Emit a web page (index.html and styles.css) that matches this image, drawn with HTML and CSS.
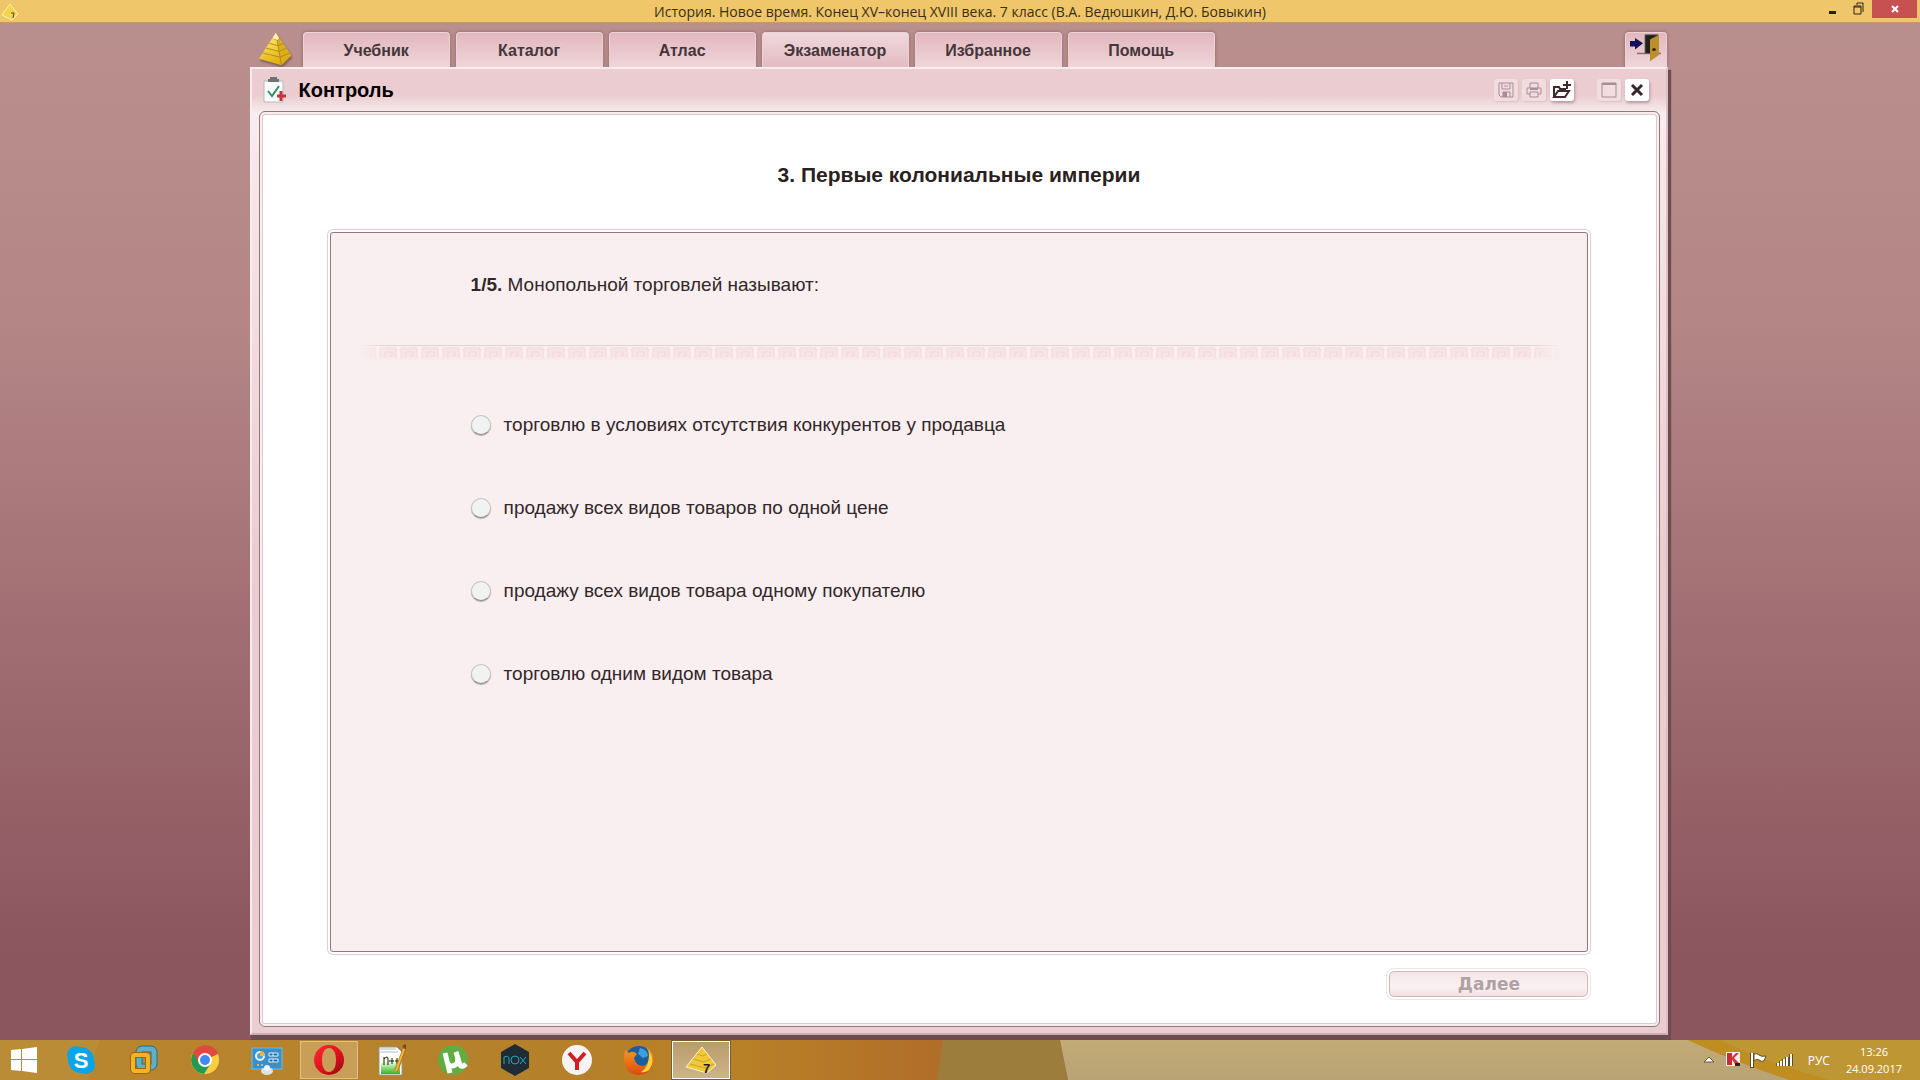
FILE: index.html
```html
<!DOCTYPE html>
<html lang="ru">
<head>
<meta charset="utf-8">
<title>История. Новое время. Конец XV–конец XVIII века. 7 класс</title>
<link rel="stylesheet" href="styles.css">
</head>
<body>
<svg class="defs" aria-hidden="true">
  <defs>
    <linearGradient id="gold" x1="0" y1="0" x2="0.4" y2="1"><stop offset="0" stop-color="#fff0a0"/><stop offset="0.5" stop-color="#f3d242"/><stop offset="1" stop-color="#e3ae10"/></linearGradient>
    <linearGradient id="opera" x1="0" y1="0" x2="1" y2="1"><stop offset="0" stop-color="#ff2a35"/><stop offset="0.6" stop-color="#d8101c"/><stop offset="1" stop-color="#8d0a12"/></linearGradient>
    <linearGradient id="page" x1="0" y1="0" x2="0" y2="1"><stop offset="0.3" stop-color="#f8fff0"/><stop offset="1" stop-color="#2fb51c"/></linearGradient>
    <linearGradient id="fox" x1="0" y1="0" x2="0" y2="1"><stop offset="0" stop-color="#f7a01e"/><stop offset="1" stop-color="#dc4a12"/></linearGradient>
    <pattern id="meander" width="21" height="16" patternUnits="userSpaceOnUse">
      <path d="M2 2H18V12H2Z" fill="#f8e4e7"/>
      <path d="M0 11H20V14H0Z" fill="#f9e9eb"/>
      <path d="M2 12V2H18V12M7 12V6H14V10H11" fill="none" stroke="#f0d9dc" stroke-width="1"/>
    </pattern>
    <symbol id="pyramid" viewBox="0 0 40 42">
      <path d="M21 1 40 29 28 41 0 33Z" fill="url(#gold)"/>
      <path d="M21 1 40 29 28 41Z" fill="#dcae1c"/>
      <path d="M17 8 23 10 26 8M13 14 24 17 30 14M9 20 25 24 34 20M5 26 26 31 38 26M21 1 28 41" fill="none" stroke="#a98118" stroke-width="1"/>
      <path d="M21 1 17 8 23 10 25 8Z" fill="#fff3b8"/>
    </symbol>
  </defs>
</svg>

<header class="titlebar">
  <svg class="title-icon" viewBox="0 0 18 18" aria-hidden="true"><path d="M9 1 17 11 11 17 1 12Z" fill="#f2d54a" stroke="#fff0b4"/><path d="M10 10h3l-1 5" fill="none" stroke="#444" stroke-width="1"/></svg>
  <h1 class="title-text">История. Новое время. Конец XV–конец XVIII века. 7 класс (В.А. Ведюшкин, Д.Ю. Бовыкин)</h1>
  <div class="caption-buttons">
    <button class="caption" aria-label="Свернуть"><svg width="12" height="14"><path d="M2 9h7v3H2z" fill="#222"/></svg></button>
    <button class="caption" aria-label="Восстановить"><svg width="12" height="14"><path d="M1 4h7v8H1zM1 5h7M4 3V1h6v9" fill="none" stroke="#2b2412"/></svg></button>
    <button class="caption caption-close" aria-label="Закрыть"><svg width="12" height="12"><path d="M3 3 9 9M9 3 3 9" stroke="#fff" stroke-width="2"/></svg></button>
  </div>
</header>

<main class="app">
  <nav class="tabs">
    <svg class="logo" aria-hidden="true"><use href="#pyramid"/></svg>
    <button class="tab">Учебник</button>
    <button class="tab">Каталог</button>
    <button class="tab">Атлас</button>
    <button class="tab tab-active">Экзаменатор</button>
    <button class="tab">Избранное</button>
    <button class="tab">Помощь</button>
    <button class="tab tab-exit" aria-label="Выход">
      <svg width="34" height="28" viewBox="0 0 34 36" preserveAspectRatio="none"><path d="M8 25H32" stroke="#8a7070" stroke-width="2"/><path d="M1 9H6V5L14 12 6 20V16H1Z" fill="#14105a"/><path d="M16 1H29V25H16Z" fill="#232018" stroke="#666" stroke-width="1"/><path d="M21 7 30 1V27L21 35Z" fill="#bb8f2c"/><circle cx="25" cy="20" r="2" fill="#3b2d08"/></svg>
    </button>
  </nav>

  <section class="panel">
    <div class="panel-head">
      <svg class="clip" viewBox="0 0 24 26" aria-hidden="true"><path d="M1 4H20V25H1Z" fill="#f9fbfb" stroke="#b3bcbc"/><path d="M5 5V2H7V0H14V2H16V5Z" fill="#6c7276"/><path d="M5 14 9 19 16 9" fill="none" stroke="#2f8f6b" stroke-width="2"/><path d="M18 14V24M14 19H23" stroke="#c5303a" stroke-width="3"/></svg>
      <h2 class="panel-title">Контроль</h2>
      <div class="tools">
        <button class="tool" disabled aria-label="Сохранить"><svg width="16" height="16"><path d="M1 1H15V15H3L1 13ZM4 1V7H12V1M5 15V10H12V15M6 4H10" fill="none" stroke="#a78f93"/><path d="M5 10H9V15H5Z" fill="#a78f93"/></svg></button>
        <button class="tool" disabled aria-label="Печать"><svg width="16" height="16"><path d="M4 6V1H12V6M4 12H1V6H15V12H12M4 10H12V15H4Z" fill="none" stroke="#a78f93"/><path d="M4 6H12V8H4Z" fill="#a78f93"/></svg></button>
        <button class="tool" aria-label="Открыть"><svg width="20" height="18"><path d="M2 16V6H7L8 8H13V10M2 16 6 10H17L13 16Z" fill="none" stroke="#3f2b2e" stroke-width="2"/><path d="M15 0V8M11 4H19" stroke="#3f2b2e" stroke-width="2"/></svg></button>
        <button class="tool tool-window" disabled aria-label="Развернуть"><svg width="16" height="16"><path d="M1 1H15V15H1Z" fill="none" stroke="#a78f93"/><path d="M1 1H15V3H1Z" fill="#a78f93"/></svg></button>
        <button class="tool" aria-label="Закрыть раздел"><svg width="16" height="16"><path d="M3 3 13 13M13 3 3 13" stroke="#33272a" stroke-width="3"/></svg></button>
      </div>
    </div>

    <div class="frame">
      <h3 class="topic">3. Первые колониальные империи</h3>
      <form class="quiz-form">
        <fieldset class="quiz">
          <legend class="question"><b>1/5.</b> Монопольной торговлей называют:</legend>
          <svg class="ornament" aria-hidden="true"><rect width="100%" height="16" fill="url(#meander)"/></svg>
          <label class="answer"><input class="radio" type="radio" name="answer">торговлю в условиях отсутствия конкурентов у продавца</label>
          <label class="answer"><input class="radio" type="radio" name="answer">продажу всех видов товаров по одной цене</label>
          <label class="answer"><input class="radio" type="radio" name="answer">продажу всех видов товара одному покупателю</label>
          <label class="answer"><input class="radio" type="radio" name="answer">торговлю одним видом товара</label>
        </fieldset>
        <button class="next" type="button" disabled>Далее</button>
      </form>
    </div>
  </section>
</main>

<footer class="taskbar">
  <svg class="wallpaper" viewBox="0 0 1920 40" preserveAspectRatio="none" aria-hidden="true">
    <defs>
      <linearGradient id="w1"><stop offset="0" stop-color="#b9872f"/><stop offset="0.6" stop-color="#b5802a"/><stop offset="0.78" stop-color="#b98127"/><stop offset="1" stop-color="#b06d29"/></linearGradient>
      <linearGradient id="w2" x1="0" y1="0" x2="0" y2="1"><stop offset="0" stop-color="#c3ab78"/><stop offset="1" stop-color="#b9a374"/></linearGradient>
    </defs>
    <path d="M0 0H944V40H0Z" fill="url(#w1)"/>
    <path d="M0 0H100Q92 20 88 40H0Z" fill="#bb8c36"/>
    <path d="M943 0H1060L1068 40H937Z" fill="#9d7d3c"/>
    <path d="M1060 0H1920V40H1068Z" fill="url(#w2)"/>
    <path d="M1688 0H1920V40H1790Q1740 24 1688 0Z" fill="#b98d2c"/>
    <path d="M1688 0H1730Q1770 26 1830 40H1790Q1740 24 1688 0Z" fill="#c08d20"/>
    <path d="M1720 0H1920V40H1830Q1770 24 1720 0Z" fill="#be9734"/>
  </svg>
  <button class="task task-start" aria-label="Пуск"><svg width="28" height="28"><path d="M1 4 11 3V13H1ZM12 3 27 1V13H12ZM1 14H11V25L1 24ZM12 14H27V27L12 25Z" fill="#fff"/></svg></button>
  <button class="task" aria-label="Skype"><svg width="30" height="30"><circle cx="10" cy="10" r="9" fill="#0aa5e6"/><circle cx="20" cy="20" r="9" fill="#0aa5e6"/><circle cx="15" cy="15" r="13" fill="#0aa5e6"/><text x="15" y="23" class="skype">S</text></svg></button>
  <button class="task" aria-label="VMware"><svg width="30" height="30"><rect x="11" y="4" width="15" height="18" rx="3" fill="none" stroke="#2d6f83" stroke-width="7"/><rect x="11" y="4" width="15" height="18" rx="3" fill="none" stroke="#5fb0c4" stroke-width="5"/><rect x="5" y="10" width="15" height="16" rx="2" fill="none" stroke="#a3650c" stroke-width="6"/><rect x="5" y="10" width="15" height="16" rx="2" fill="none" stroke="#f4b324" stroke-width="4"/></svg></button>
  <button class="task" aria-label="Chrome"><svg width="30" height="30"><circle cx="15" cy="15" r="14" fill="#fbce3f"/><path d="M15 15 3 8A14 14 0 0 1 28 9Z" fill="#dd4b3e"/><path d="M15 15 3 8A14 14 0 0 0 14 29L21 18Z" fill="#229a55"/><path d="M3 8 9 18 15 8H28A14 14 0 0 0 3 8Z" fill="#dd4b3e"/><circle cx="15" cy="15" r="7" fill="#fff"/><circle cx="15" cy="15" r="5" fill="#4387f2"/></svg></button>
  <button class="task" aria-label="Панель управления"><svg width="32" height="30"><rect x="1" y="3" width="30" height="21" fill="#3a8fc9" stroke="#69bfe6"/><circle cx="9" cy="11" r="4" fill="#4aa3dc" stroke="#e4f4fc" stroke-width="2"/><path d="M9 11V6A5 5 0 0 1 14 11Z" fill="#f6b23e"/><path d="M18 8H27V11H18ZM18 14H27V17H18ZM22 8V11M22 14V17" fill="#1d6aa6" stroke="#dff2fb"/><path d="M6 20H8M10 20H12" stroke="#f3b04a" stroke-width="2"/><ellipse cx="16" cy="26" rx="6" ry="4" fill="#dfe2e4"/><circle cx="16" cy="23" r="3" fill="#f4f5f6"/></svg></button>
  <button class="task task-open" aria-label="Opera"><svg width="32" height="32"><path d="M16 1A15 15 0 1 0 16 31A15 15 0 1 0 16 1ZM16 4C21 4 23 10 23 16S21 28 16 28 9 22 9 16 11 4 16 4Z" fill="url(#opera)" fill-rule="evenodd"/></svg></button>
  <button class="task" aria-label="Notepad++"><svg width="30" height="32"><path d="M3 3H21L26 8V31H3Z" fill="#fff" stroke="#8d9a84"/><path d="M5 12H24V30H5Z" fill="url(#page)"/><path d="M4 5H20M4 8H22" stroke="#b4bcc4"/><path d="M8 21V13M8 15Q12 11 12 15V21M13 17H18M16 14V20M19 17H24M21 14V20" fill="none" stroke="#17210f"/><path d="M20 27 29 4" stroke="#b87616" stroke-width="4"/><path d="M20 27 28 5" stroke="#f1bb42" stroke-width="2"/><path d="M28 4 30 1" stroke="#7e3f3f" stroke-width="4"/></svg></button>
  <button class="task" aria-label="µTorrent"><svg width="32" height="32"><circle cx="16" cy="16" r="15" fill="#62ad43"/><path d="M8 9 13 29M10 18Q13 24 18 21T19 8L23 21Q25 24 29 20" fill="none" stroke="#fff" stroke-width="5"/></svg></button>
  <button class="task" aria-label="Nox"><svg width="30" height="32"><path d="M15 0 29 8V24L15 32 1 24V8Z" fill="#202c35"/><path d="M4 20V13Q9 11 9 15V20M20 13 26 20M26 13 20 20" fill="none" stroke="#27a5b8" stroke-width="1"/><circle cx="15" cy="16" r="4" fill="none" stroke="#27a5b8"/></svg></button>
  <button class="task" aria-label="Яндекс"><svg width="32" height="32"><circle cx="16" cy="16" r="15" fill="#f6f4f2"/><path d="M8 9 16 18 24 9M16 17V26" fill="none" stroke="#cf1f24" stroke-width="4"/></svg></button>
  <button class="task" aria-label="Firefox"><svg width="32" height="32"><circle cx="16" cy="16" r="14" fill="#1c5d9d"/><path d="M17 4Q24 5 25 12L20 14 15 10Z" fill="#3f9fdc"/><path d="M2 6 6 9Q10 6 14 10L11 14Q13 22 20 22 26 20 26 13 26 7 23 3 34 11 30 21 25 32 14 31 2 29 1 17 1 11 2 6Z" fill="url(#fox)"/><path d="M26 7Q33 17 26 26 22 29 18 28 27 23 26 7Z" fill="#f8d23c"/></svg></button>
  <button class="task task-current" aria-label="История"><svg width="32" height="30"><path d="M17 2 31 20 22 28 1 22Z" fill="#f1c936" stroke="#fff6c8" stroke-width="1"/><path d="M12 9 18 11 22 9M8 14 19 17 26 14M5 19 20 23 29 19" fill="none" stroke="#c9a22e"/><text x="18" y="28" class="seven">7</text></svg></button>
  <div class="tray">
    <button class="tray-icon" aria-label="Скрытые значки"><svg width="10" height="8"><path d="M0 6 5 1 10 6Z" fill="#fff" stroke="#6a5a30"/></svg></button>
    <svg width="16" height="16" aria-hidden="true"><rect width="14" height="14" fill="#f5eeee"/><path d="M1 1H6V13H1Z" fill="#c52d33"/><path d="M5 6 10 1H13L8 6 14 12H9Z" fill="#d0353a"/><path d="M9 11H14V14H9Z" fill="#222"/></svg>
    <svg width="18" height="16" aria-hidden="true"><path d="M2 1V16" stroke="#5a4f2c" stroke-width="4"/><path d="M2 1V15" stroke="#fff" stroke-width="2"/><path d="M4 2Q7 1 9 3T16 4L14 9Q11 10 9 8T4 9Z" fill="#fff" stroke="#5a4f2c"/></svg>
    <svg width="18" height="16" aria-hidden="true"><path d="M2 11V14M5 9V14M8 7V14M11 5V14M15 2V14" stroke="#5a4f2c" stroke-width="4"/><path d="M2 11V14M5 9V14M8 7V14M11 5V14M15 2V14" stroke="#fff" stroke-width="2"/></svg>
    <span class="lang">РУС</span>
    <div class="clock"><time>13:26</time><time>24.09.2017</time></div>
  </div>
</footer>
</body>
</html>
```
FILE: styles.css
```css
* {
  box-sizing: border-box;
}

body {
  margin: 0;
  min-height: 100vh;
  display: flex;
  flex-direction: column;
  background: linear-gradient(#ba908f, #b48686 30%, #8c565e 88%, #8c565e);
  font-family: "Liberation Sans", Arial, sans-serif;
  color: #33272a;
}

button {
  margin: 0;
  padding: 0;
  border: 0;
  background: none;
  font: inherit;
  color: inherit;
}

h1, h2, h3 {
  margin: 0;
}

.defs {
  position: absolute;
  width: 0;
  height: 0;
}

/* Window title bar */
.titlebar {
  display: grid;
  grid-template-columns: 120px 1fr 120px;
  height: 23px;
  background: #efc66a;
  border-bottom: 1px solid #c39a66;
}

.title-icon {
  width: 18px;
  height: 18px;
  margin: 3px 1px;
}

.title-text {
  font: 14px/23px "Open Sans", "Noto Sans", sans-serif;
  text-align: center;
  color: #3a2f15;
  white-space: nowrap;
}

.caption-buttons {
  display: flex;
  justify-content: flex-end;
  padding-right: 3px;
}

.caption {
  width: 26px;
  height: 18px;
  display: grid;
  place-items: center;
}

.caption-close {
  width: 45px;
  background: #c75050;
}

/* Application shell */
.app {
  flex: 1;
  display: flex;
  flex-direction: column;
  margin: 0 calc(13% + 2px) 0 13%;
  padding-top: 9px;
}

.tabs {
  display: flex;
  gap: 6px;
  height: 35px;
  padding: 0 1px 0 5px;
}

.logo {
  width: 40px;
  height: 34px;
  margin-right: 2px;
  filter: drop-shadow(1px 2px 1px #7a5a5a);
}

.tab {
  width: 147px;
  padding-top: 2px;
  border: 1px solid #ecd3d6;
  border-bottom: 0;
  border-radius: 4px 4px 0 0;
  background: linear-gradient(#e2b7bd, #efd6da);
  box-shadow: 0 0 3px 1px #9f7577;
  font-weight: bold;
  font-size: 16px;
  color: #44363a;
}

.tab-active {
  background: linear-gradient(#efd8dc, #e3bbc2);
}

.tab-exit {
  width: 42px;
  margin-left: auto;
  padding: 0 0 4px;
  display: grid;
  place-items: center;
}

.panel {
  flex: 1;
  display: flex;
  flex-direction: column;
  position: relative;
  margin-bottom: 5px;
  padding: 0 6px 6px 7px;
  border: 2px solid #f8ecee;
  border-right-color: #dcc0c4;
  border-bottom-color: #c9adb1;
  background: linear-gradient(#ebccd0 0, #ebccd0 26px, #f8edef 44px, #f6e8ea 90px, #ebccd0 500px);
  box-shadow: 2px 4px 1px 1px #6d4c52;
}

.panel-head {
  display: flex;
  align-items: center;
  height: 42px;
  padding: 0 11px 0 4px;
}

.clip {
  width: 24px;
  height: 26px;
}

.panel-title {
  margin-left: 12px;
  font-size: 20px;
  line-height: 24px;
  color: #000;
}

.tools {
  display: flex;
  gap: 4px;
  margin-left: auto;
}

.tool {
  width: 24px;
  height: 22px;
  display: grid;
  place-items: center;
  border-radius: 3px;
  background: #fff;
  box-shadow: 1px 2px 3px #b39a9e;
}

.tool:disabled {
  background: #f1dcdf;
  box-shadow: 1px 1px 2px #dabfc3;
}

.tool-window {
  margin-left: 19px;
}

.frame {
  flex: 1;
  display: flex;
  flex-direction: column;
  border: 1px solid #93777d;
  border-radius: 6px;
  background: #fff;
  box-shadow: inset 0 0 0 2px #f8eeef, inset 0 0 0 3px #e0c8cb;
  padding: 51px 68px 29px 67px;
}

.topic {
  margin-bottom: 42px;
  font-size: 21px;
  line-height: 24px;
  text-align: center;
  color: #2b1f22;
}

.quiz-form {
  flex: 1;
  display: flex;
  flex-direction: column;
}

.quiz {
  flex: 1;
  min-width: 0;
  margin: 3px;
  padding: 0;
  border: 1px solid #93777d;
  border-radius: 3px;
  background: #f9eff0;
  box-shadow: 0 0 0 2px #fff, 0 0 0 3px #e6cdd0;
}

.question {
  float: left;
  width: 100%;
  padding: 40px 140px 48px;
  font-size: 19px;
  line-height: 24px;
}

.ornament {
  display: block;
  clear: both;
  width: calc(100% - 52px);
  height: 20px;
  margin: 0 26px 48px;
  border-top: 1px solid #e0d3d5;
  mask-image: linear-gradient(90deg, transparent, #000 30px, #000 calc(100% - 30px), transparent);
}

.answer {
  display: flex;
  align-items: center;
  height: 24px;
  margin: 0 140px 59px;
  font-size: 19px;
}

.radio {
  appearance: none;
  width: 20px;
  height: 20px;
  margin: 0 13px 0 0;
  border: 1px solid #c5c5c5;
  border-bottom-color: #8e8e8e;
  border-radius: 50%;
  background: #f1f3f2;
  box-shadow: 0 1px 1px #b0a6a7;
}

.radio:checked {
  background: radial-gradient(#5c4a4d 4px, #f1f3f2 5px);
}

.next {
  align-self: flex-end;
  width: 199px;
  height: 26px;
  margin: 16px 3px 0;
  border: 1px solid #cbb9bb;
  border-radius: 5px;
  background: linear-gradient(#f5e6e8, #faf1f2 60%, #f3e0e3);
  box-shadow: 0 0 0 2px #fff, 0 0 0 3px #f2e4e6;
  font: bold 17px/22px "DejaVu Sans", sans-serif;
  color: #b0a2a4;
}

/* Taskbar */
.taskbar {
  position: relative;
  display: flex;
  gap: 4px;
  height: 40px;
}

.wallpaper {
  position: absolute;
  inset: 0;
  width: 100%;
  height: 100%;
}

.task {
  position: relative;
  width: 58px;
  display: grid;
  place-items: center;
}

.task-start {
  width: 48px;
}

.task-open {
  margin: 1px 0;
  border: 1px solid #dfc08a;
  background: #c99f58;
}

.task-current {
  margin: 1px 0;
  border: 1px solid #fff;
  outline: 1px solid #76602f;
  background: linear-gradient(#b89c6c, #cdb48a);
}

.skype {
  font: bold 22px "Liberation Sans", sans-serif;
  fill: #fff;
  text-anchor: middle;
}

.seven {
  font: bold 13px "Liberation Sans", sans-serif;
  fill: #222;
}

.tray {
  position: relative;
  display: flex;
  align-items: center;
  gap: 8px;
  margin-left: auto;
  padding-right: 18px;
  font: 12px/17px "Open Sans", "Noto Sans", sans-serif;
  color: #fff;
}

.tray-icon {
  display: grid;
  margin-right: 4px;
}

.lang {
  margin: 0 8px 0 6px;
}

.clock {
  display: grid;
  justify-items: center;
  font-size: 11px;
}
```
